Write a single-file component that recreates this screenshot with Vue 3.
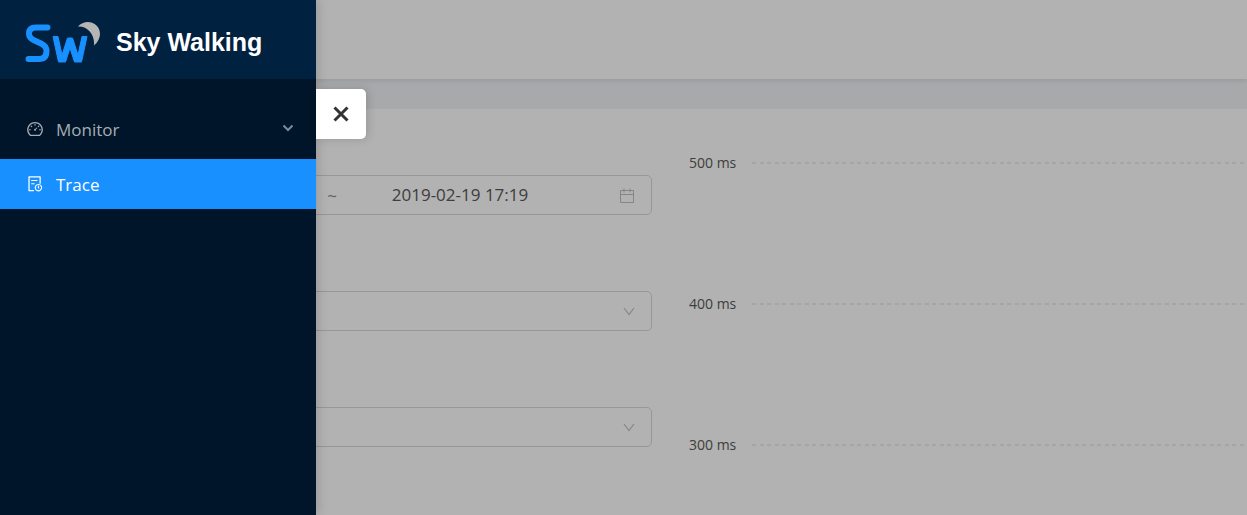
<script setup>
import { ref } from 'vue'

const startTime = ref('')
const endTime = ref('2019-02-19 17:19')
const ticks = [500, 400, 300]
const filters = ['Service', 'Endpoint']
</script>

<template>
  <div class="app">
    <div class="page">
      <header class="topbar"></header>
      <main class="card">
        <form class="filters" @submit.prevent>
          <div class="range">
            <input v-model="startTime" class="date" type="text" aria-label="Start time" />
            <span class="tilde">~</span>
            <input v-model="endTime" class="date" type="text" aria-label="End time" />
            <svg class="calendar" viewBox="0 0 14 15" aria-hidden="true">
              <path d="M0.5 2.5h13v12h-13zM0.5 6.500h13M4 0.5v4M10 0.5v4" />
            </svg>
          </div>
          <div v-for="name in filters" :key="name" class="select-box">
            <select class="select" :aria-label="name"><option></option></select>
            <svg class="arrow" viewBox="0 0 12 9" aria-hidden="true"><path d="M1 1l5 6.500l5-6.500" /></svg>
          </div>
        </form>
        <section class="chart" aria-label="Duration">
          <div v-for="t in ticks" :key="t" class="tick">
            <span class="tick-label">{{ t }} ms</span>
            <span class="grid-line"></span>
          </div>
        </section>
      </main>
    </div>
    <div class="mask"></div>
    <aside class="drawer">
      <a class="brand" href="#">
        <svg class="logo" viewBox="0 0 76 42" aria-hidden="true">
          <path class="s" d="M22.500 6.500H11Q4 6.500 4 12.500Q4 17 9 19.300L16 22.500Q21.500 25 21.500 30Q21.500 38 14 38H3.500" />
          <path class="w" d="M28 15.500H33L37 34L42.500 17H47.500L53 34L57 15.500H62L56.500 41H49.500L45 27L40.500 41H33.500Z" />
          <path class="moon" d="M53 5.500C58-.5 67-.5 72 5C77 11 75.500 19 69 24.500C70 14 63 5 53 5.500Z" />
        </svg>
        <h1 class="title">Sky Walking</h1>
      </a>
      <nav class="menu">
        <a class="item" href="#monitor">
          <svg class="icon" viewBox="0 0 1024 1024" aria-hidden="true">
            <path d="M924.800 385.600a446.700 446.700 0 0 0-96-142.400 446.700 446.700 0 0 0-142.400-96C631.100 123.800 572.500 112 512 112s-119.100 11.800-174.400 35.200a446.700 446.700 0 0 0-142.400 96 446.700 446.700 0 0 0-96 142.400C75.800 440.900 64 499.500 64 560c0 132.700 58.300 257.700 159.900 343.100l1.700 1.400c5.800 4.800 13.100 7.500 20.600 7.500h531.700c7.500 0 14.800-2.700 20.600-7.500l1.700-1.400C901.700 817.700 960 692.700 960 560c0-60.500-11.900-119.100-35.200-174.400zM761.400 836H262.600A371.120 371.120 0 0 1 140 560c0-99.400 38.700-192.800 109-263 70.300-70.300 163.700-109 263-109 99.400 0 192.800 38.700 263 109 70.300 70.300 109 163.700 109 263 0 105.600-44.500 205.500-122.600 276zM623.500 421.500a8.030 8.030 0 0 0-11.300 0L527.700 506c-18.700-5-39.400-.2-54.100 14.500a55.950 55.950 0 0 0 0 79.200 55.950 55.950 0 0 0 79.200 0 55.870 55.870 0 0 0 14.500-54.100l84.500-84.500c3.100-3.100 3.100-8.200 0-11.300l-28.300-28.300zM490 320h44c4.400 0 8-3.600 8-8v-80c0-4.400-3.600-8-8-8h-44c-4.400 0-8 3.600-8 8v80c0 4.400 3.600 8 8 8zm260 218v44c0 4.400 3.600 8 8 8h80c4.400 0 8-3.600 8-8v-44c0-4.400-3.600-8-8-8h-80c-4.400 0-8 3.600-8 8zm12.700-197.200l-31.100-31.100a8.030 8.030 0 0 0-11.300 0l-56.600 56.600a8.030 8.030 0 0 0 0 11.300l31.100 31.100c3.100 3.100 8.200 3.100 11.300 0l56.600-56.600c3.100-3.100 3.100-8.200 0-11.300zm-458.600-31.100a8.030 8.030 0 0 0-11.300 0l-31.100 31.100a8.030 8.030 0 0 0 0 11.300l56.600 56.600c3.100 3.100 8.200 3.100 11.300 0l31.100-31.100c3.100-3.100 3.100-8.200 0-11.300l-56.600-56.600zM262 530h-80c-4.400 0-8 3.600-8 8v44c0 4.400 3.600 8 8 8h80c4.400 0 8-3.600 8-8v-44c0-4.400-3.600-8-8-8z" />
          </svg>
          <span class="text">Monitor</span>
          <svg class="chevron" viewBox="0 0 12 10" aria-hidden="true"><path d="M1.500 1.500l4.500 4.500l4.500-4.500" /></svg>
        </a>
        <a class="item active" href="#trace" aria-current="page">
          <svg class="icon" viewBox="0 0 1024 1024" aria-hidden="true">
            <path d="M304 280h336c4.400 0 8 3.600 8 8v48c0 4.400-3.600 8-8 8H304c-4.400 0-8-3.600-8-8v-48c0-4.400 3.600-8 8-8zM304 464h176c4.400 0 8 3.600 8 8v48c0 4.400-3.600 8-8 8H304c-4.400 0-8-3.600-8-8v-48c0-4.400 3.600-8 8-8zM440 852H208V148h560v344c0 4.400 3.600 8 8 8h56c4.400 0 8-3.600 8-8V108c0-17.700-14.300-32-32-32H168c-17.700 0-32 14.300-32 32v784c0 17.700 14.300 32 32 32h272c4.400 0 8-3.600 8-8v-56c0-4.400-3.600-8-8-8z" />
            <path class="ring" d="M706 540a180 180 0 1 0 1 0zM706 610v115l40 40" />
          </svg>
          <span class="text">Trace</span>
        </a>
      </nav>
      <button class="close" type="button" aria-label="Close menu">
        <svg class="cross" viewBox="0 0 16 16" aria-hidden="true"><path d="M1.500 1.500l13 13M14.500 1.500l-13 13" /></svg>
      </button>
    </aside>
  </div>
</template>

<style>
html, body, #app { height: 100%; }
body { margin: 0; overflow: hidden; }
</style>

<style scoped>
.app {
  position: relative;
  min-height: 100%;
  display: flex;
  font-family: "Open Sans", "Noto Sans", sans-serif;
  background: #f0f2f5;
}
.app *, .app *::before { box-sizing: border-box; }
.page { flex: 1; display: flex; flex-direction: column; gap: 30px; }
.topbar { height: 79px; background: #fff; box-shadow: 0 1px 5px rgba(0, 21, 41, 0.12); }
.card { flex: 1; display: flex; gap: 30px; padding: 40px 0 0 40px; background: #fff; }
.filters { width: 612px; display: flex; flex-direction: column; gap: 76px; padding-top: 26px; }
.range, .select-box {
  display: flex;
  align-items: center;
  height: 40px;
  border: 1px solid #d9d9d9;
  border-radius: 5px;
}
.range { padding: 0 17px 0 47px; }
.date {
  flex: 1;
  min-width: 0;
  border: 0;
  padding: 0;
  background: transparent;
  text-align: center;
  font: 17px/24px "Open Sans", "Noto Sans", sans-serif;
  color: #595959;
}
.tilde { width: 24px; text-align: center; font-size: 17px; color: #8c8c8c; }
.calendar { width: 14px; height: 15px; margin-left: 44px; fill: none; stroke: #bfbfbf; }
.select-box { position: relative; }
.select {
  width: 100%;
  height: 100%;
  padding: 0 16px;
  border: 0;
  appearance: none;
  background: transparent;
  font: 17px/24px "Open Sans", "Noto Sans", sans-serif;
}
.arrow { position: absolute; right: 16px; width: 12px; height: 9px; fill: none; stroke: #bfbfbf; stroke-width: 1.2; pointer-events: none; }
.chart { flex: 1; display: flex; flex-direction: column; gap: 117px; padding: 2px 0 0 7px; }
.tick { display: flex; align-items: center; gap: 15px; height: 24px; }
.tick-label { width: 48px; white-space: nowrap; font-size: 14px; line-height: 24px; color: #595959; }
.grid-line {
  flex: 1;
  height: 2px;
  background: repeating-linear-gradient(90deg, #ededed 0 4px, transparent 4px 8px, #ededed 8px 12px, transparent 12px 15px);
}
.mask { position: absolute; inset: 0; background: rgba(0, 0, 0, 0.3); }
.drawer {
  position: absolute;
  top: 0;
  bottom: 0;
  left: 0;
  width: 316px;
  background: #001529;
  box-shadow: 2px 0 10px rgba(0, 0, 0, 0.15);
}
.brand { display: flex; align-items: center; gap: 15px; height: 79px; padding: 5px 0 0 25px; background: #002140; text-decoration: none; }
.logo { width: 76px; height: 42px; fill: none; }
.s { stroke: #1890ff; stroke-width: 6; stroke-linejoin: round; stroke-linecap: round; }
.w { fill: #1890ff; stroke: #1890ff; stroke-width: 1; stroke-linejoin: round; }
.moon { fill: #b5b5b5; }
.title { margin: 0; font: bold 25px/40px "Liberation Sans", Arial, sans-serif; color: #fff; }
.menu { display: flex; flex-direction: column; gap: 5px; padding-top: 25px; }
.item {
  display: flex;
  align-items: center;
  height: 50px;
  padding: 0 22px 0 26px;
  gap: 12px;
  font-size: 17px;
  color: #a6adb4;
  text-decoration: none;
}
.active { background: #1890ff; color: #fff; }
.icon { width: 18px; height: 18px; fill: currentColor; }
.ring { fill: none; stroke: currentColor; stroke-width: 65; }
.text { flex: 1; padding-top: 2px; line-height: 24px; }
.chevron { width: 12px; height: 10px; fill: none; stroke: #7f8a94; stroke-width: 2; }
.close {
  position: absolute;
  left: 100%;
  top: 89px;
  display: flex;
  align-items: center;
  justify-content: center;
  width: 50px;
  height: 50px;
  padding: 0;
  border: 0;
  border-radius: 0 5px 5px 0;
  background: #fff;
  box-shadow: 2px 0 10px rgba(0, 0, 0, 0.15);
}
.cross { width: 16px; height: 16px; fill: none; stroke: #333; stroke-width: 3; }
</style>
